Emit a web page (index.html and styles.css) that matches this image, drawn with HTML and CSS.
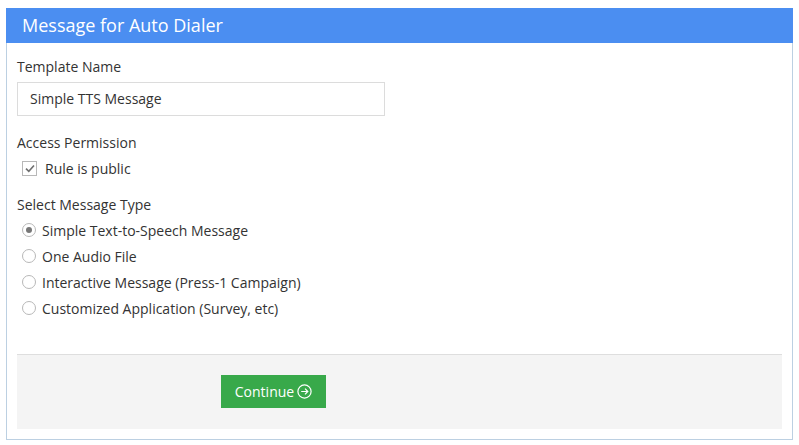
FILE: index.html
```html
<!DOCTYPE html>
<html>
<head>
<meta charset="utf-8">
<link rel="stylesheet" href="styles.css">
</head>
<body>
<div class="panel">
  <div class="panel-head">Message for Auto Dialer</div>
  <div class="panel-body">
    <div class="field">
      <label class="lbl">Template Name</label>
      <div class="input">Simple TTS Message</div>
    </div>
    <div class="field perm">
      <div class="lbl">Access Permission</div>
      <div class="opt">
        <span class="check"><svg width="10" height="9" viewBox="0 0 10 9"><path d="M1 4.6 L3.8 7.3 L9 1.5" fill="none" stroke="#6f6f6f" stroke-width="1.6"/></svg></span>
        <span>Rule is public</span>
      </div>
    </div>
    <div class="field types">
      <div class="lbl">Select Message Type</div>
      <div class="radio-opt"><span class="radio on"></span><span>Simple Text-to-Speech Message</span></div>
      <div class="radio-opt"><span class="radio"></span><span>One Audio File</span></div>
      <div class="radio-opt"><span class="radio"></span><span>Interactive Message (Press-1 Campaign)</span></div>
      <div class="radio-opt"><span class="radio"></span><span>Customized Application (Survey, etc)</span></div>
    </div>
    <div class="footer">
      <button class="btn">Continue <svg width="15" height="15" viewBox="0 0 15 15"><circle cx="7.5" cy="7.5" r="6.6" fill="none" stroke="#fff" stroke-width="1.2"/><path d="M4.2 7.5 H10.8 M8 4.7 L10.8 7.5 L8 10.3" fill="none" stroke="#fff" stroke-width="1.2"/></svg></button>
    </div>
  </div>
</div>
</body>
</html>
```
FILE: styles.css
```css
html, body { background: #fff; }
body {
  margin: 8px 6px 0 6px;
  font-family: "Open Sans", "Noto Sans", sans-serif;
  font-size: 14px;
  color: #333;
}
.panel {
  border: 1px solid #bcd0e2;
  width: 787px;
  height: 432px;
  box-sizing: border-box;
  display: flex;
  flex-direction: column;
}
.panel-head {
  background: #4b8ef1;
  color: #fff;
  height: 35px;
  margin: -1px -1px 0 -1px;
  padding-left: 16px;
  font-size: 18px;
  line-height: 35px;
}
.panel-body {
  flex: 1;
  padding: 14px 10px 10px 10px;
  display: flex;
  flex-direction: column;
}
.lbl {
  display: block;
  line-height: 20px;
  color: #333;
}
.input {
  margin-top: 5px;
  width: 368px;
  height: 34px;
  box-sizing: border-box;
  border: 1px solid #dcdcdc;
  padding-left: 12px;
  line-height: 32px;
  color: #333;
}
.perm { margin-top: 17px; }
.opt {
  display: flex;
  align-items: center;
  margin-top: 5px;
  padding-left: 5px;
  height: 20px;
}
.check {
  width: 13px;
  height: 13px;
  border: 1px solid #b8b8b8;
  background: #fff;
  display: flex;
  align-items: center;
  justify-content: center;
  margin-right: 8px;
}
.types { margin-top: 17px; }
.radio-opt {
  display: flex;
  align-items: center;
  height: 26px;
  padding-left: 5px;
}
.types .lbl { margin-bottom: 2px; }
.radio {
  width: 12px;
  height: 12px;
  border: 1px solid #b8b8b8;
  border-radius: 50%;
  margin-right: 6px;
  position: relative;
  background: #fff;
}
.radio.on::after {
  content: "";
  position: absolute;
  left: 3px;
  top: 3px;
  width: 6px;
  height: 6px;
  border-radius: 50%;
  background: #777;
}
.footer {
  margin-top: auto;
  height: 75px;
  background: #f4f4f4;
  border-top: 1px solid #dedede;
  box-sizing: border-box;
  padding-top: 20px;
  padding-left: 204px;
}
.btn {
  width: 105px;
  height: 33px;
  border: none;
  background: #38a94a;
  color: #fff;
  font-family: "Open Sans", "Noto Sans", sans-serif;
  font-size: 14px;
  display: flex;
  align-items: center;
  justify-content: center;
  gap: 3px;
  padding: 0;
}
```
